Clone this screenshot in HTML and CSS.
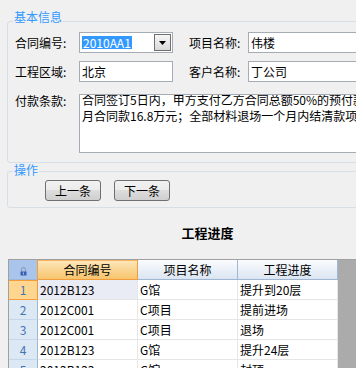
FILE: index.html
```html
<!DOCTYPE html>
<html lang="zh-CN">
<head>
<meta charset="utf-8">
<title>工程合同</title>
<link rel="stylesheet" href="styles.css">
</head>
<body>
<div class="page">
  <fieldset class="group basic">
    <legend class="legend legend-basic">基本信息</legend>
    <div class="row">
      <span class="lbl">合同编号:</span>
      <div class="combo">
        <span class="combo-sel">2010AA1</span>
        <span class="combo-btn"><svg width="7" height="4" viewBox="0 0 7 4"><path d="M0 0h7L3.5 4z" fill="#000"/></svg></span>
      </div>
      <span class="lbl lbl-right">项目名称:</span>
      <div class="input input-wide">伟楼</div>
    </div>
    <div class="row row-second">
      <span class="lbl">工程区域:</span>
      <div class="input">北京</div>
      <span class="lbl lbl-right">客户名称:</span>
      <div class="input input-wide">丁公司</div>
    </div>
    <div class="row row-memo">
      <span class="lbl">付款条款:</span>
      <div class="memo">
        <div class="memo-text">合同签订5日内，甲方支付乙方合同总额50%的预付款<br>月合同款16.8万元；全部材料退场一个月内结清款项</div>
      </div>
    </div>
  </fieldset>

  <fieldset class="group ops">
    <legend class="legend legend-ops">操作</legend>
    <div class="buttons">
      <button class="btn" type="button">上一条</button>
      <button class="btn" type="button">下一条</button>
    </div>
  </fieldset>

  <div class="title">工程进度</div>

  <div class="grid">
    <table class="sheet">
      <thead>
        <tr>
          <th class="corner"><svg width="7" height="9" viewBox="0 0 7 9"><path d="M1.5 4.5V2.6a2 2 0 0 1 4 0v1.9" fill="none" stroke="#8190a8" stroke-width="1"/><rect x="0.5" y="4.5" width="6" height="4" fill="#3a5fb5"/><rect x="3" y="5.5" width="1" height="2" fill="#a9c5eb"/></svg></th>
          <th class="hd hd-sel">合同编号</th>
          <th class="hd">项目名称</th>
          <th class="hd">工程进度</th>
        </tr>
      </thead>
      <tbody>
        <tr>
          <td class="rh rh-sel">1</td>
          <td class="cell cur">2012B123</td>
          <td class="cell">G馆</td>
          <td class="cell">提升到20层</td>
        </tr>
        <tr>
          <td class="rh">2</td>
          <td class="cell">2012C001</td>
          <td class="cell">C项目</td>
          <td class="cell">提前进场</td>
        </tr>
        <tr>
          <td class="rh">3</td>
          <td class="cell">2012C001</td>
          <td class="cell">C项目</td>
          <td class="cell">退场</td>
        </tr>
        <tr>
          <td class="rh">4</td>
          <td class="cell">2012B123</td>
          <td class="cell">G馆</td>
          <td class="cell">提升24层</td>
        </tr>
        <tr>
          <td class="rh">5</td>
          <td class="cell">2012B123</td>
          <td class="cell">G馆</td>
          <td class="cell">封顶</td>
        </tr>
      </tbody>
    </table>
    <div class="grid-fill"></div>
  </div>
</div>
</body>
</html>
```

FILE: styles.css
```css
html, body {
  margin: 0;
  padding: 0;
  overflow: hidden;
  background: #f0f0f0;
}

body {
  font-family: "Noto Sans CJK SC", "Noto Sans", sans-serif;
  font-size: 12px;
  color: #000;
}

.page {
  width: 415px;
}

/* group boxes */
.group {
  margin: 0 0 0 7px;
  border: 1px solid #d5dfe5;
  border-radius: 3px;
  min-inline-size: 0;
  width: 420px;
}

.basic {
  margin-top: 11px;
  padding: 1px 5px 9px 5px;
}

.ops {
  margin-top: 1px;
  padding: 2px 5px 6px 5px;
}

.legend {
  margin: 0;
  padding: 0 1px;
  font-size: 12px;
  line-height: 12px;
  color: #3399ff;
}

.legend-basic {
  padding-bottom: 8px;
}

.legend-ops {
  padding-bottom: 2px;
}

/* form rows */
.row {
  display: flex;
  align-items: center;
  height: 21px;
  padding-left: 2px;
}

.row-second {
  margin-top: 8px;
}

.row-memo {
  margin-top: 12px;
  height: auto;
  align-items: flex-start;
}

.lbl {
  flex: none;
  width: 64px;
  line-height: 14px;
  white-space: nowrap;
}

.lbl-right {
  margin-left: 16px;
  width: 59px;
}

.input {
  flex: none;
  box-sizing: border-box;
  width: 94px;
  height: 21px;
  border: 1px solid #a5acb5;
  background: #fff;
  padding: 0 2px;
  line-height: 19px;
  white-space: nowrap;
  overflow: hidden;
}

.input-wide {
  width: 160px;
}

.combo {
  flex: none;
  box-sizing: border-box;
  width: 94px;
  height: 21px;
  border: 1px solid #a5acb5;
  background: #fff;
  padding: 1px;
  display: flex;
  align-items: center;
  justify-content: space-between;
}

.combo-sel {
  margin-left: 1px;
  padding: 0 1px;
  background: #3399ff;
  color: #fff;
  line-height: 13px;
}

.combo-btn {
  box-sizing: border-box;
  width: 17px;
  height: 17px;
  border: 1px solid #6f6f6f;
  background: linear-gradient(#f6f6f6, #d9d9d9);
  display: flex;
  align-items: center;
  justify-content: center;
}

.memo {
  flex: none;
  box-sizing: border-box;
  width: 320px;
  height: 59px;
  border: 1px solid #a5acb5;
  background: #fff;
  padding: 0 2px;
  overflow: hidden;
}

.memo-text {
  white-space: nowrap;
  line-height: 16px;
  margin-top: -3px;
}

/* buttons */
.buttons {
  display: flex;
  gap: 13px;
  padding-left: 32px;
}

.btn {
  box-sizing: border-box;
  width: 56px;
  height: 21px;
  padding: 0;
  border: 1px solid #707070;
  border-radius: 3px;
  background: linear-gradient(#f2f2f2 0%, #ebebeb 50%, #dddddd 50%, #cfcfcf 100%);
  font: inherit;
  line-height: 19px;
  color: #000;
}

/* title */
.title {
  margin-top: 15px;
  text-align: center;
  font-weight: bold;
  font-size: 13px;
  line-height: 20px;
}

/* grid */
.grid {
  margin: 16px 0 0 8px;
  display: flex;
  align-items: flex-start;
  border-top: 1px solid #a0a0a0;
  border-left: 1px solid #a0a0a0;
  background: #ababab;
  height: 130px;
}

.sheet {
  flex: none;
  border-collapse: separate;
  border-spacing: 0;
  table-layout: fixed;
  background: #fff;
  width: 329px;
}

.sheet th,
.sheet td {
  box-sizing: border-box;
  padding: 0;
  line-height: 19px;
  white-space: nowrap;
  overflow: hidden;
  font-weight: normal;
}

.corner {
  width: 29px;
  background: #a9c5eb;
  border-right: 1px solid #f0a040;
  border-bottom: 1px solid #9fb7d2;
  text-align: center;
}

.corner svg {
  display: inline-block;
  vertical-align: -1px;
}

.hd {
  width: 100px;
  text-align: center;
  background: linear-gradient(#fbfcfe, #dbe5f2);
  border-right: 1px solid #9fb7d2;
  border-bottom: 1px solid #9fb7d2;
}

.hd-sel {
  background: linear-gradient(#fde8bc, #f7c46c);
  border-right: 1px solid #f29c3b;
  border-bottom: 1px solid #f29c3b;
  box-shadow: inset 0 1px #f5b560;
}

.rh {
  text-align: center;
  color: #4474b4;
  background: #dde8f5;
  border-right: 1px solid #9fb7d2;
  border-bottom: 1px solid #c6d6ea;
}

.rh-sel {
  background: #fed690;
  border-right: 1px solid #f29c3b;
  border-bottom: 1px solid #f29c3b;
  box-shadow: inset 0 1px #f29c3b;
}

.cell {
  padding-left: 2px !important;
  border-right: 1px solid #e6e6e6;
  border-bottom: 1px solid #e6e6e6;
}

.cur {
  background: #e9ebf5;
}

.grid-fill {
  flex: 1;
}
```
